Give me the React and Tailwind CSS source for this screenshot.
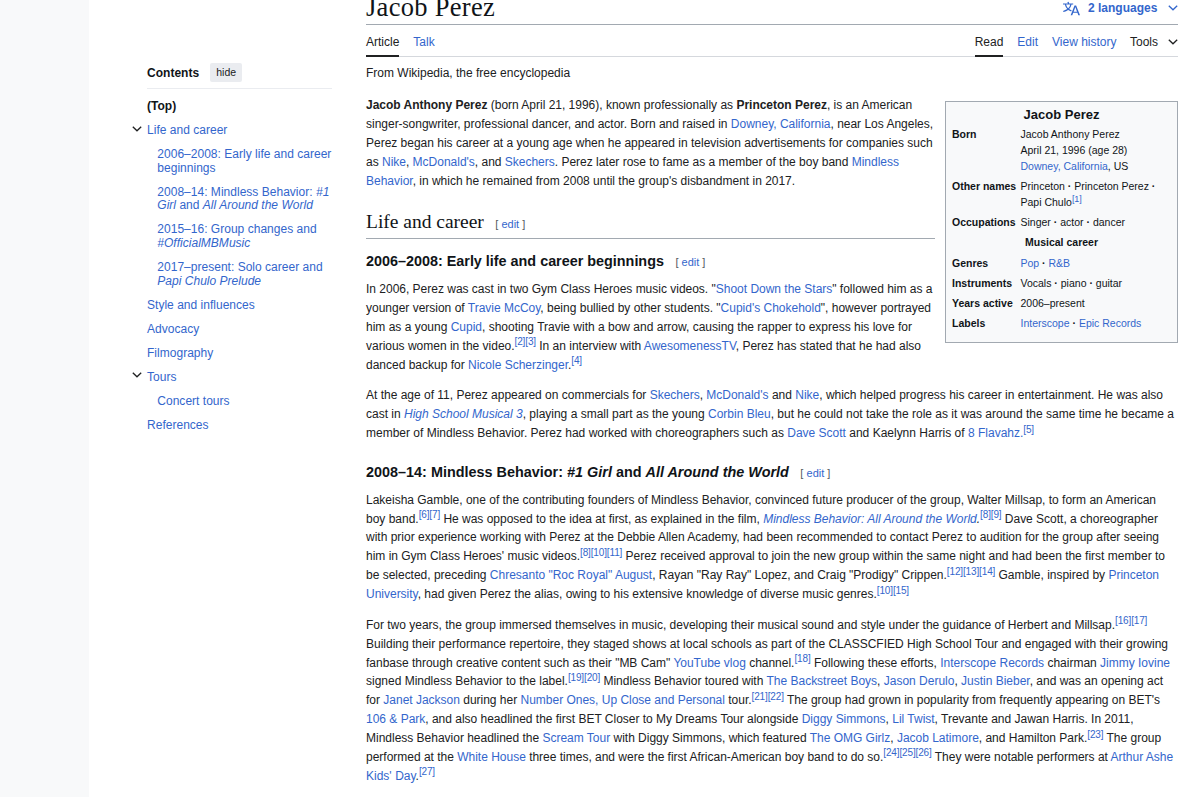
import { clsx } from 'clsx'

const A = ({ children }) => (
  <a href="#" className="text-[#3366cc]">{children}</a>
)

// Citation markers, e.g. <Ref n={[2, 3]} />
const Ref = ({ n, small }) => (
  <sup className={clsx('relative align-baseline leading-none text-[#3366cc]', small ? '-top-[4px] text-[9px] tracking-[-0.1px]' : '-top-[4.5px] text-[10px] tracking-[-0.14px]')}>
    {n.map(i => <a key={i} href="#">[{i}]</a>)}
  </sup>
)

const L = ({ w, children }) => (
  <span className={clsx('block h-[18.86px] whitespace-nowrap [text-align-last:justify]', w)}>{children}</span>
)

const Dot = () => <b> · </b>

const Chevron = ({ className }) => (
  <svg viewBox="0 0 10 6" className={clsx('h-[6px] w-[10px] shrink-0', className)} fill="none" stroke="currentColor" strokeWidth="1.3">
    <path d="M0.8 0.8 L5 4.8 L9.2 0.8" />
  </svg>
)

const EditLink = () => (
  <span className="ml-[11.5px] text-[11px] font-normal text-[#54595d] [font-family:'Liberation_Sans',Arial,sans-serif]">
    [ <A>edit</A> ]
  </span>
)

function Languages() {
  return (
    <div className="flex h-4 items-center text-[12px] font-bold text-[#3366cc]">
      <svg viewBox="0 0 20 20" className="mr-[8px] h-[17px] w-[17px]" fill="currentColor">
        <path d="M20 18h-1.44a.6.6 0 0 1-.4-.12.8.8 0 0 1-.23-.31L17 15h-5l-1 2.54a.8.8 0 0 1-.22.3.6.6 0 0 1-.4.14H9l4.55-11.47h1.89zm-3.53-4.31L14.89 9.5a12 12 0 0 1-.39-1.24q-.09.37-.19.69l-.19.56-1.58 4.19zm-6.3-1.58a13.4 13.4 0 0 1-2.91-1.41 11.46 11.46 0 0 0 2.81-5.37H12V4H7.31a4 4 0 0 0-.2-.56C6.87 2.79 6.6 2 6.6 2l-1.47.5s.4.89.6 1.5H0v1.33h2.15A11.23 11.23 0 0 0 5 10.7a17.2 17.2 0 0 1-5 2.1q.56.82.87 1.38a23.3 23.3 0 0 0 5.22-2.51 15.6 15.6 0 0 0 3.56 1.77zM3.63 5.33h4.91a8.1 8.1 0 0 1-2.45 4.45 9.1 9.1 0 0 1-2.46-4.45" />
      </svg>
      <span className="w-[69px] whitespace-nowrap [text-align-last:justify]">2 languages</span>
      <Chevron className="ml-[11px]" />
    </div>
  )
}

function Tab({ active, children, className }) {
  return (
    <a href="#" className={clsx('h-[23.5px] whitespace-nowrap', active ? 'border-b-2 border-[#202122]' : 'text-[#3366cc]', className)}>
      {children}
    </a>
  )
}

function TocItem({ sub, open, bold, children }) {
  return (
    <li className={clsx('relative mb-[10.3px]', sub && 'ml-[10.3px]')}>
      {open && <Chevron className="absolute -left-[15px] top-[1.5px] text-[#202122]" />}
      <a href="#" className={clsx('block whitespace-nowrap', bold ? 'font-bold text-[#101418]' : 'text-[#3366cc]')}>{children}</a>
    </li>
  )
}

function Contents() {
  return (
    <nav className="ml-[58px] w-[185px] shrink-0 pt-[63px] text-[12px] leading-[13.7px] tracking-[0.02px]">
      <div className="mb-[11px] flex h-[26px] border-b border-[#eaecf0]">
        <span className="pt-[3.6px] font-bold text-[#101418]">Contents</span>
        <button className="ml-[11px] h-[19px] w-[32px] rounded-[2px] bg-[#eaecf0] text-[10.5px] text-[#202122]">hide</button>
      </div>
      <ul>
        <TocItem bold>(Top)</TocItem>
        <TocItem open>Life and career</TocItem>
        <TocItem sub>2006–2008: Early life and career<br />beginnings</TocItem>
        <TocItem sub>2008–14: Mindless Behavior: <i>#1<br />Girl</i> and <i>All Around the World</i></TocItem>
        <TocItem sub>2015–16: Group changes and<br /><i>#OfficialMBMusic</i></TocItem>
        <TocItem sub>2017–present: Solo career and<br /><i>Papi Chulo Prelude</i></TocItem>
        <TocItem>Style and influences</TocItem>
        <TocItem>Advocacy</TocItem>
        <TocItem>Filmography</TocItem>
        <TocItem open>Tours</TocItem>
        <TocItem sub>Concert tours</TocItem>
        <TocItem>References</TocItem>
      </ul>
    </nav>
  )
}

function Row({ label, children }) {
  return (
    <div className="mb-[4.2px] flex">
      <b className="w-[68.5px] shrink-0 whitespace-nowrap">{label}</b>
      <div className="whitespace-nowrap">{children}</div>
    </div>
  )
}

function Infobox() {
  return (
    <aside className="float-right mt-[4.8px] h-[242px] w-[233px] border border-[#a2a9b1] bg-[#f8f9fa] px-[6px] pt-[5px] text-[10.5px] leading-[15.9px] tracking-normal text-[#101418]">
      <div className="mb-[4.6px] text-center text-[13px] font-bold">Jacob Perez</div>
      <Row label="Born">
        Jacob Anthony Perez<br />April 21, 1996 (age 28)<br /><A>Downey, California</A>, US
      </Row>
      <Row label="Other names">
        Princeton<Dot />Princeton Perez<Dot /><br />Papi Chulo<Ref n={[1]} small />
      </Row>
      <Row label="Occupations">Singer<Dot />actor<Dot />dancer</Row>
      <div className="mb-[4.2px] text-center font-bold">Musical career</div>
      <Row label="Genres"><A>Pop</A><Dot /><A>R&amp;B</A></Row>
      <Row label="Instruments">Vocals<Dot />piano<Dot />guitar</Row>
      <Row label="Years active">2006–present</Row>
      <Row label="Labels"><A>Interscope</A><Dot /><A>Epic Records</A></Row>
    </aside>
  )
}

function Article() {
  return (
    <div className="text-[12px] leading-[18.86px] tracking-[-0.01px]">
      <Infobox />
      <p>
        <L w="w-[546px]"><b>Jacob Anthony Perez</b> (born April 21, 1996), known professionally as <b>Princeton Perez</b>, is an American</L>
        <L w="w-[567px]">singer-songwriter, professional dancer, and actor. Born and raised in <A>Downey, California</A>, near Los Angeles,</L>
        <L w="w-[566px]">Perez began his career at a young age when he appeared in television advertisements for companies such</L>
        <L w="w-[533px]">as <A>Nike</A>, <A>McDonald's</A>, and <A>Skechers</A>. Perez later rose to fame as a member of the boy band <A>Mindless</A></L>
        <L w="w-[429px]"><A>Behavior</A>, in which he remained from 2008 until the group's disbandment in 2017.</L>
      </p>
      <h2 className="mr-[243px] mt-[19px] h-[30px] whitespace-nowrap border-b border-[#a2a9b1] text-[19.5px] leading-[26px] text-[#101418] [font-family:'Liberation_Serif',serif]">
        Life and career<EditLink />
      </h2>
      <h3 className="mt-[12px] h-[20px] whitespace-nowrap text-[14.4px] font-bold leading-[20px] text-[#101418]">
        2006–2008: Early life and career beginnings<EditLink />
      </h3>
      <p className="mt-[8.6px]">
        <L w="w-[566px]">In 2006, Perez was cast in two Gym Class Heroes music videos. "<A>Shoot Down the Stars</A>" followed him as a</L>
        <L w="w-[565px]">younger version of <A>Travie McCoy</A>, being bullied by other students. "<A>Cupid's Chokehold</A>", however portrayed</L>
        <L w="w-[546px]">him as a young <A>Cupid</A>, shooting Travie with a bow and arrow, causing the rapper to express his love for</L>
        <L w="w-[555px]">various women in the video.<Ref n={[2, 3]} /> In an interview with <A>AwesomenessTV</A>, Perez has stated that he had also</L>
        <L w="w-[216px]">danced backup for <A>Nicole Scherzinger</A>.<Ref n={[4]} /></L>
      </p>
      <p className="mt-[12px]">
        <L w="w-[797px]">At the age of 11, Perez appeared on commercials for <A>Skechers</A>, <A>McDonald's</A> and <A>Nike</A>, which helped progress his career in entertainment. He was also</L>
        <L w="w-[808px]">cast in <i><A>High School Musical 3</A></i>, playing a small part as the young <A>Corbin Bleu</A>, but he could not take the role as it was around the same time he became a</L>
        <L w="w-[668px]">member of Mindless Behavior. Perez had worked with choreographers such as <A>Dave Scott</A> and Kaelynn Harris of <A>8 Flavahz.</A><Ref n={[5]} /></L>
      </p>
      <h3 className="mt-[19px] h-[20px] whitespace-nowrap text-[14.4px] font-bold leading-[20px] tracking-[0.01px] text-[#101418]">
        2008–14: Mindless Behavior: <i>#1 Girl</i> and <i>All Around the World</i><EditLink />
      </h3>
      <p className="mt-[8.8px]">
        <L w="w-[790px]">Lakeisha Gamble, one of the contributing founders of Mindless Behavior, convinced future producer of the group, Walter Millsap, to form an American</L>
        <L w="w-[792px]">boy band.<Ref n={[6, 7]} /> He was opposed to the idea at first, as explained in the film, <i><A>Mindless Behavior: All Around the World</A>.</i><Ref n={[8, 9]} /> Dave Scott, a choreographer</L>
        <L w="w-[793px]">with prior experience working with Perez at the Debbie Allen Academy, had been recommended to contact Perez to audition for the group after seeing</L>
        <L w="w-[799px]">him in Gym Class Heroes' music videos.<Ref n={[8, 10, 11]} /> Perez received approval to join the new group within the same night and had been the first member to</L>
        <L w="w-[793px]">be selected, preceding <A>Chresanto "Roc Royal" August</A>, Rayan "Ray Ray" Lopez, and Craig "Prodigy" Crippen.<Ref n={[12, 13, 14]} /> Gamble, inspired by <A>Princeton</A></L>
        <L w="w-[543px]"><A>University</A>, had given Perez the alias, owing to his extensive knowledge of diverse music genres.<Ref n={[10, 15]} /></L>
      </p>
      <p className="mt-[12px]">
        <L w="w-[781px]">For two years, the group immersed themselves in music, developing their musical sound and style under the guidance of Herbert and Millsap.<Ref n={[16, 17]} /></L>
        <L w="w-[802px]">Building their performance repertoire, they staged shows at local schools as part of the CLASSCFIED High School Tour and engaged with their growing</L>
        <L w="w-[804px]">fanbase through creative content such as their "MB Cam" <A>YouTube vlog</A> channel.<Ref n={[18]} /> Following these efforts, <A>Interscope Records</A> chairman <A>Jimmy Iovine</A></L>
        <L w="w-[797px]">signed Mindless Behavior to the label.<Ref n={[19, 20]} /> Mindless Behavior toured with <A>The Backstreet Boys</A>, <A>Jason Derulo</A>, <A>Justin Bieber</A>, and was an opening act</L>
        <L w="w-[794px]">for <A>Janet Jackson</A> during her <A>Number Ones, Up Close and Personal</A> tour.<Ref n={[21, 22]} /> The group had grown in popularity from frequently appearing on BET's</L>
        <L w="w-[767px]"><A>106 &amp; Park</A>, and also headlined the first BET Closer to My Dreams Tour alongside <A>Diggy Simmons</A>, <A>Lil Twist</A>, Trevante and Jawan Harris. In 2011,</L>
        <L w="w-[795px]">Mindless Behavior headlined the <A>Scream Tour</A> with Diggy Simmons, which featured <A>The OMG Girlz</A>, <A>Jacob Latimore</A>, and Hamilton Park.<Ref n={[23]} /> The group</L>
        <L w="w-[807px]">performed at the <A>White House</A> three times, and were the first African-American boy band to do so.<Ref n={[24, 25, 26]} /> They were notable performers at <A>Arthur Ashe</A></L>
        <L w="w-[69px]"><A>Kids' Day</A>.<Ref n={[27]} /></L>
      </p>
    </div>
  )
}

export default function App() {
  return (
    <div className="flex h-[797px] w-[1200px] overflow-hidden bg-white text-[#202122] [font-family:'Liberation_Sans',Arial,sans-serif]">
      <div className="w-[89px] shrink-0 bg-[#f8f9fa]" />
      <Contents />
      <main className="ml-[34px] w-[812px] shrink-0">
        <header className="flex h-[25px] items-start justify-between border-b border-[#a2a9b1]">
          <h1 className="-mt-[8px] whitespace-nowrap text-[26.5px] leading-[30px] tracking-[0.3px] text-[#101418] [font-family:'Liberation_Serif',serif]">Jacob Perez</h1>
          <Languages />
        </header>
        <div className="flex h-[32px] border-b border-[#d5d8dd] pt-[8px] text-[12px] leading-[18px]">
          <Tab active>Article</Tab>
          <Tab className="ml-[14px]">Talk</Tab>
          <Tab active className="ml-auto">Read</Tab>
          <Tab className="ml-[14px]">Edit</Tab>
          <Tab className="ml-[14px]">View history</Tab>
          <span className="ml-[13.5px] flex h-[18px] items-center">Tools<Chevron className="ml-[10px]" /></span>
        </div>
        <div className="mb-[14.2px] mt-[7px] h-[18px] text-[12px] leading-[18px]">From Wikipedia, the free encyclopedia</div>
        <Article />
      </main>
    </div>
  )
}
